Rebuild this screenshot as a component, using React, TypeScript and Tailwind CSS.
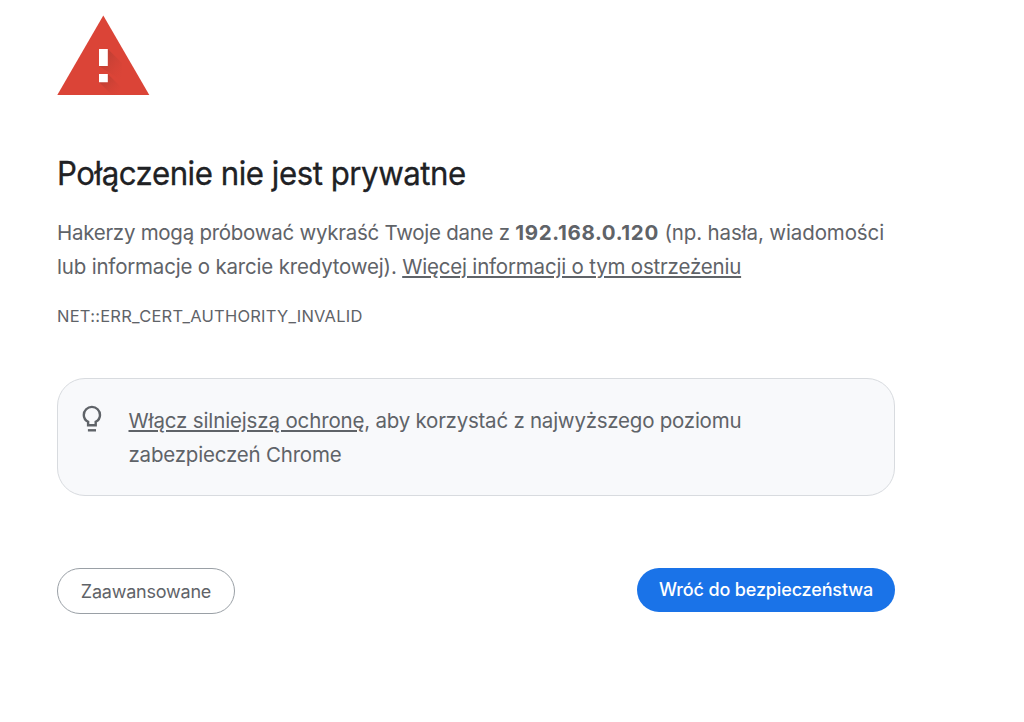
function WarningIcon() {
  return (
    <svg
      width="93"
      height="80"
      viewBox="0 0 93 80"
      className="block"
      aria-hidden="true"
    >
      <defs>
        <linearGradient id="shade" x1="0" y1="0" x2="1" y2="1">
          <stop offset="0" stopColor="#9c382e" stopOpacity="0.75" />
          <stop offset="1" stopColor="#db4437" stopOpacity="0" />
        </linearGradient>
      </defs>
      <path d="M46.3 0.5L92.3 80H0.3Z" fill="#db4437" />
      <path d="M50.8 34L65 48V66L42 51L50.8 50Z" fill="url(#shade)" />
      <path d="M50.8 59L64 72L60 80H55L42 67L50.8 66.5Z" fill="url(#shade)" />
      <path d="M42 34H50.8V51H42ZM42 59H50.8V67.3H42Z" fill="#fff" />
    </svg>
  );
}

function BulbIcon() {
  return (
    <svg
      width="20"
      height="28"
      viewBox="0 0 20 28"
      fill="none"
      stroke="#5f6368"
      strokeWidth="2.4"
      className="block shrink-0"
      aria-hidden="true"
    >
      <path d="M6.1 20.2V16.8C3.4 15.4 1.8 13 1.8 10A8.1 8.1 0 0 1 18 10C18 13 16.4 15.4 13.7 16.8V20.2Z" />
      <path d="M5.9 25.3H14" />
    </svg>
  );
}

export default function App() {
  return (
    <div className="h-[722px] overflow-hidden bg-white font-['Inter',sans-serif] text-[#5f6368]">
      <main className="ml-[57px] flex w-[838px] flex-col pt-[15px]">
        <WarningIcon />

        <h1 className="mt-[58px] origin-left scale-x-[0.946] text-[33px] leading-[40px] tracking-[-0.5px] whitespace-nowrap text-[#202124] [-webkit-text-stroke:0.3px_#202124]">
          Połączenie nie jest prywatne
        </h1>

        <p className="mt-[23px] text-[20.5px] leading-[34px] whitespace-nowrap">
          <span className="block tracking-[-0.27px]">
            Hakerzy mogą próbować wykraść Twoje dane z{" "}
            <strong className="font-bold tracking-[0.65px]">
              192.168.0.120
            </strong>{" "}
            <span className="tracking-[-0.12px]">(np. hasła, wiadomości</span>
          </span>
          <span className="block tracking-[-0.19px]">
            lub informacje o karcie kredytowej).{" "}
            <a href="#" className="underline">
              Więcej informacji o tym ostrzeżeniu
            </a>
          </span>
        </p>

        <div className="mt-[20px] text-[16.5px] leading-[24px] tracking-[0.24px]">
          <span>NET::ERR_CERT_AUTHORITY_INVALID</span>
        </div>

        <section className="mt-[50px] flex h-[118px] rounded-[28px] border border-[#d8dbdf] bg-[#f8f9fb] pt-[25px] pl-[24px]">
          <div className="mt-[1px]">
            <BulbIcon />
          </div>
          <p className="ml-[26.5px] text-[20.5px] leading-[34px] tracking-[-0.24px] whitespace-nowrap">
            <span className="block">
              <a href="#" className="tracking-[-0.14px] underline">
                Włącz silniejszą ochronę
              </a>
              , aby korzystać z najwyższego poziomu
            </span>
            <span className="block tracking-[-0.2px]">zabezpieczeń Chrome</span>
          </p>
        </section>

        <div className="mt-[72px] flex items-start justify-between text-[18px]">
          <button className="h-[46px] w-[178px] rounded-full border border-[#9aa0a6] tracking-[-0.22px] whitespace-nowrap">
            <span>Zaawansowane</span>
          </button>
          <button className="h-[43.5px] w-[258px] rounded-full bg-[#1a73e8] font-medium tracking-[-0.14px] whitespace-nowrap text-white">
            <span>Wróć do bezpieczeństwa</span>
          </button>
        </div>
      </main>
    </div>
  );
}
